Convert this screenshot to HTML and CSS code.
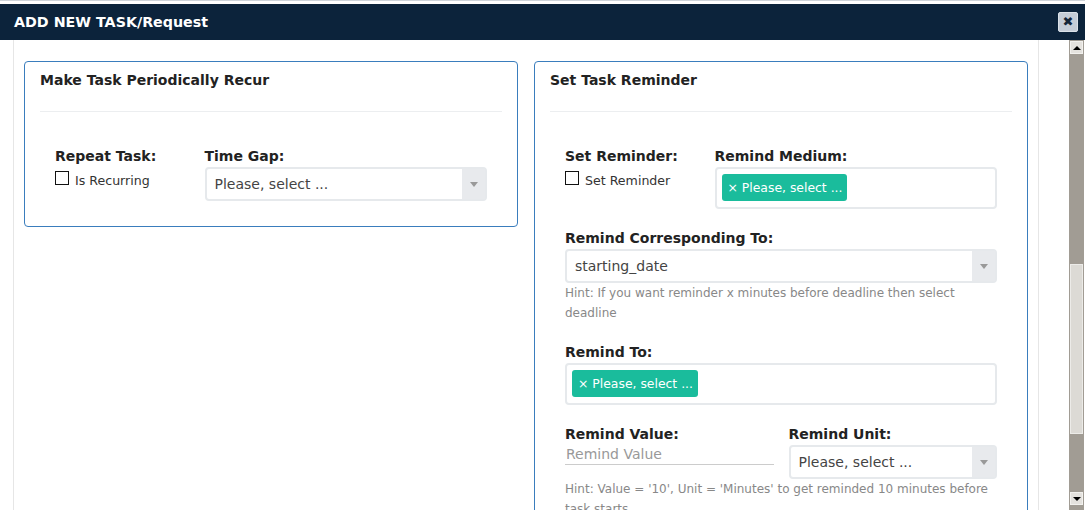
FILE: index.html
```html
<!DOCTYPE html>
<html lang="en">
<head>
<meta charset="utf-8">
<title>Add new task</title>
<link rel="stylesheet" href="styles.css">
</head>
<body>
<div class="top-line"></div>
<header class="modal-header">
  <h4 class="modal-title">ADD NEW TASK/Request</h4>
  <button class="close" type="button">&#x2716;</button>
</header>
<div class="modal-wrap">
  <div class="modal-body">
    <div class="panels">
      <section class="panel">
        <h5 class="panel-title">Make Task Periodically Recur</h5>
        <hr class="panel-rule">
        <div class="panel-body">
          <div class="row">
            <div class="col col-left">
              <label class="lbl">Repeat Task:</label>
              <div class="check"><span class="box"></span><span class="check-text">Is Recurring</span></div>
            </div>
            <div class="col col-right">
              <label class="lbl">Time Gap:</label>
              <div class="select"><span class="select-text">Please, select ...</span><span class="arrow"><span class="tri"></span></span></div>
            </div>
          </div>
        </div>
      </section>
      <section class="panel panel-tall">
        <h5 class="panel-title">Set Task Reminder</h5>
        <hr class="panel-rule">
        <div class="panel-body">
          <div class="row group">
            <div class="col col-left">
              <label class="lbl">Set Reminder:</label>
              <div class="check"><span class="box"></span><span class="check-text">Set Reminder</span></div>
            </div>
            <div class="col col-right">
              <label class="lbl">Remind Medium:</label>
              <div class="multi"><span class="tag">&times; Please, select ...</span></div>
            </div>
          </div>
          <div class="group">
            <label class="lbl">Remind Corresponding To:</label>
            <div class="select"><span class="select-text">starting_date</span><span class="arrow"><span class="tri"></span></span></div>
            <p class="hint">Hint: If you want reminder x minutes before deadline then select deadline</p>
          </div>
          <div class="group">
            <label class="lbl">Remind To:</label>
            <div class="multi"><span class="tag">&times; Please, select ...</span></div>
          </div>
          <div class="row row-half">
            <div class="col">
              <label class="lbl">Remind Value:</label>
              <div class="input">Remind Value</div>
            </div>
            <div class="col">
              <label class="lbl">Remind Unit:</label>
              <div class="select"><span class="select-text">Please, select ...</span><span class="arrow"><span class="tri"></span></span></div>
            </div>
          </div>
          <p class="hint">Hint: Value = '10', Unit = 'Minutes' to get reminded 10 minutes before task starts</p>
        </div>
      </section>
    </div>
  </div>
  <div class="scrollbar">
    <div class="sb-btn"><span class="sb-up"></span></div>
    <div class="sb-track">
      <div class="sb-space"></div>
      <div class="sb-thumb"></div>
      <div class="sb-rest"></div>
    </div>
    <div class="sb-btn"><span class="sb-down"></span></div>
  </div>
</div>
</body>
</html>
```
FILE: styles.css
```css
* { box-sizing: border-box; }
html, body {
  margin: 0;
  padding: 0;
  height: 510px;
  overflow: hidden;
  background: #fff;
  font-family: "DejaVu Sans", "Noto Sans", sans-serif;
  color: #222;
}
.top-line {
  height: 4px;
  border-top: 1px solid #cfd4da;
}
.modal-header {
  height: 36px;
  background: #0c233b;
  display: flex;
  align-items: center;
  justify-content: space-between;
  padding: 0 7px 0 14px;
}
.modal-title {
  margin: 0;
  color: #fff;
  font-size: 14.25px;
  font-weight: bold;
  line-height: 20px;
}
.close {
  width: 20px;
  height: 20px;
  padding: 0;
  border: 1px solid #dbe1e8;
  border-radius: 2px;
  background: #c5cdd8;
  color: #14263a;
  font-size: 13px;
  font-weight: bold;
  line-height: 18px;
  font-family: "DejaVu Sans", sans-serif;
  text-align: center;
}
.modal-wrap {
  display: flex;
  height: 470px;
  overflow: hidden;
}
.modal-body {
  margin-left: 13px;
  width: 1026px;
  border-left: 1px solid #e6e6e6;
  border-right: 1px solid #e6e6e6;
  padding: 21px 10px 0;
  flex: none;
}
.panels {
  display: flex;
  gap: 16px;
  align-items: flex-start;
}
.panel {
  width: 494px;
  border: 1px solid #3a7dbd;
  border-radius: 4px;
  padding: 8px 15px 25px;
}
.panel-tall {
  min-height: 600px;
}
.panel-title {
  margin: 0;
  font-size: 14px;
  font-weight: bold;
  line-height: 20px;
  color: #222;
}
.panel-rule {
  margin: 21px 0 0;
  border: 0;
  border-top: 1px solid #eceef0;
}
.panel-body {
  padding: 34px 15px 0;
}
.row {
  display: flex;
  gap: 15px;
}
.col-left { width: 134.5px; flex: none; }
.col-right { flex: 1; }
.row-half .col { flex: 1; }
.group { margin-bottom: 19px; }
.lbl {
  display: block;
  font-size: 14px;
  font-weight: bold;
  line-height: 20px;
  margin-bottom: 1px;
  color: #222;
}
.check {
  display: flex;
  align-items: flex-start;
  margin-top: 5px;
}
.box {
  width: 14px;
  height: 14px;
  border: 1px solid #111;
  background: #fff;
  flex: none;
}
.check-text {
  font-size: 12.6px;
  color: #333;
  margin-left: 6px;
  line-height: 16px;
  padding-top: 2px;
}
.select {
  height: 34px;
  border: 2px solid #e6e9ec;
  border-radius: 4px;
  display: flex;
  align-items: stretch;
  background: #fff;
}
.select-text {
  flex: 1;
  font-size: 14px;
  color: #444;
  line-height: 30px;
  padding-left: 8px;
}
.arrow {
  width: 23px;
  background: #e8eaed;
  display: flex;
  align-items: center;
  justify-content: center;
}
.tri {
  width: 0;
  height: 0;
  border-left: 4px solid transparent;
  border-right: 4px solid transparent;
  border-top: 5px solid #999;
}
.multi {
  height: 42px;
  border: 2px solid #e6e9ec;
  border-radius: 4px;
  padding: 5px;
}
.tag {
  display: inline-block;
  height: 27px;
  line-height: 27px;
  padding: 0 5px 0 6px;
  background: #1abc9c;
  color: #fff;
  font-size: 12.4px;
  border-radius: 3px;
}
.hint {
  margin: 0;
  font-size: 12px;
  line-height: 20px;
  color: #888;
}
.input {
  height: 20px;
  border-bottom: 1px solid #ccc;
  font-size: 14px;
  color: #999;
  line-height: 18px;
  padding-left: 1px;
}
.scrollbar {
  margin-left: 30px;
  width: 15px;
  flex: none;
  display: flex;
  flex-direction: column;
  background: #a19c94;
  padding-top: 1px;
}
.sb-btn {
  height: 13px;
  margin: 0 1px;
  background: #e4e2de;
  border: 1px solid #f2f1ee;
  display: flex;
  align-items: center;
  justify-content: center;
}
.sb-track {
  flex: 1;
  display: flex;
  flex-direction: column;
}
.sb-space { height: 210px; }
.sb-thumb {
  height: 170px;
  margin: 0 1px;
  background: #dcdad5;
  border: 1px solid #ecebe8;
}
.sb-rest { flex: 1; }
.sb-up {
  width: 0; height: 0;
  border-left: 4px solid transparent;
  border-right: 4px solid transparent;
  border-bottom: 4px solid #000;
}
.sb-down {
  width: 0; height: 0;
  border-left: 4px solid transparent;
  border-right: 4px solid transparent;
  border-top: 4px solid #000;
}
.scrollbar .sb-btn:last-child { margin-bottom: 5px; }
```
